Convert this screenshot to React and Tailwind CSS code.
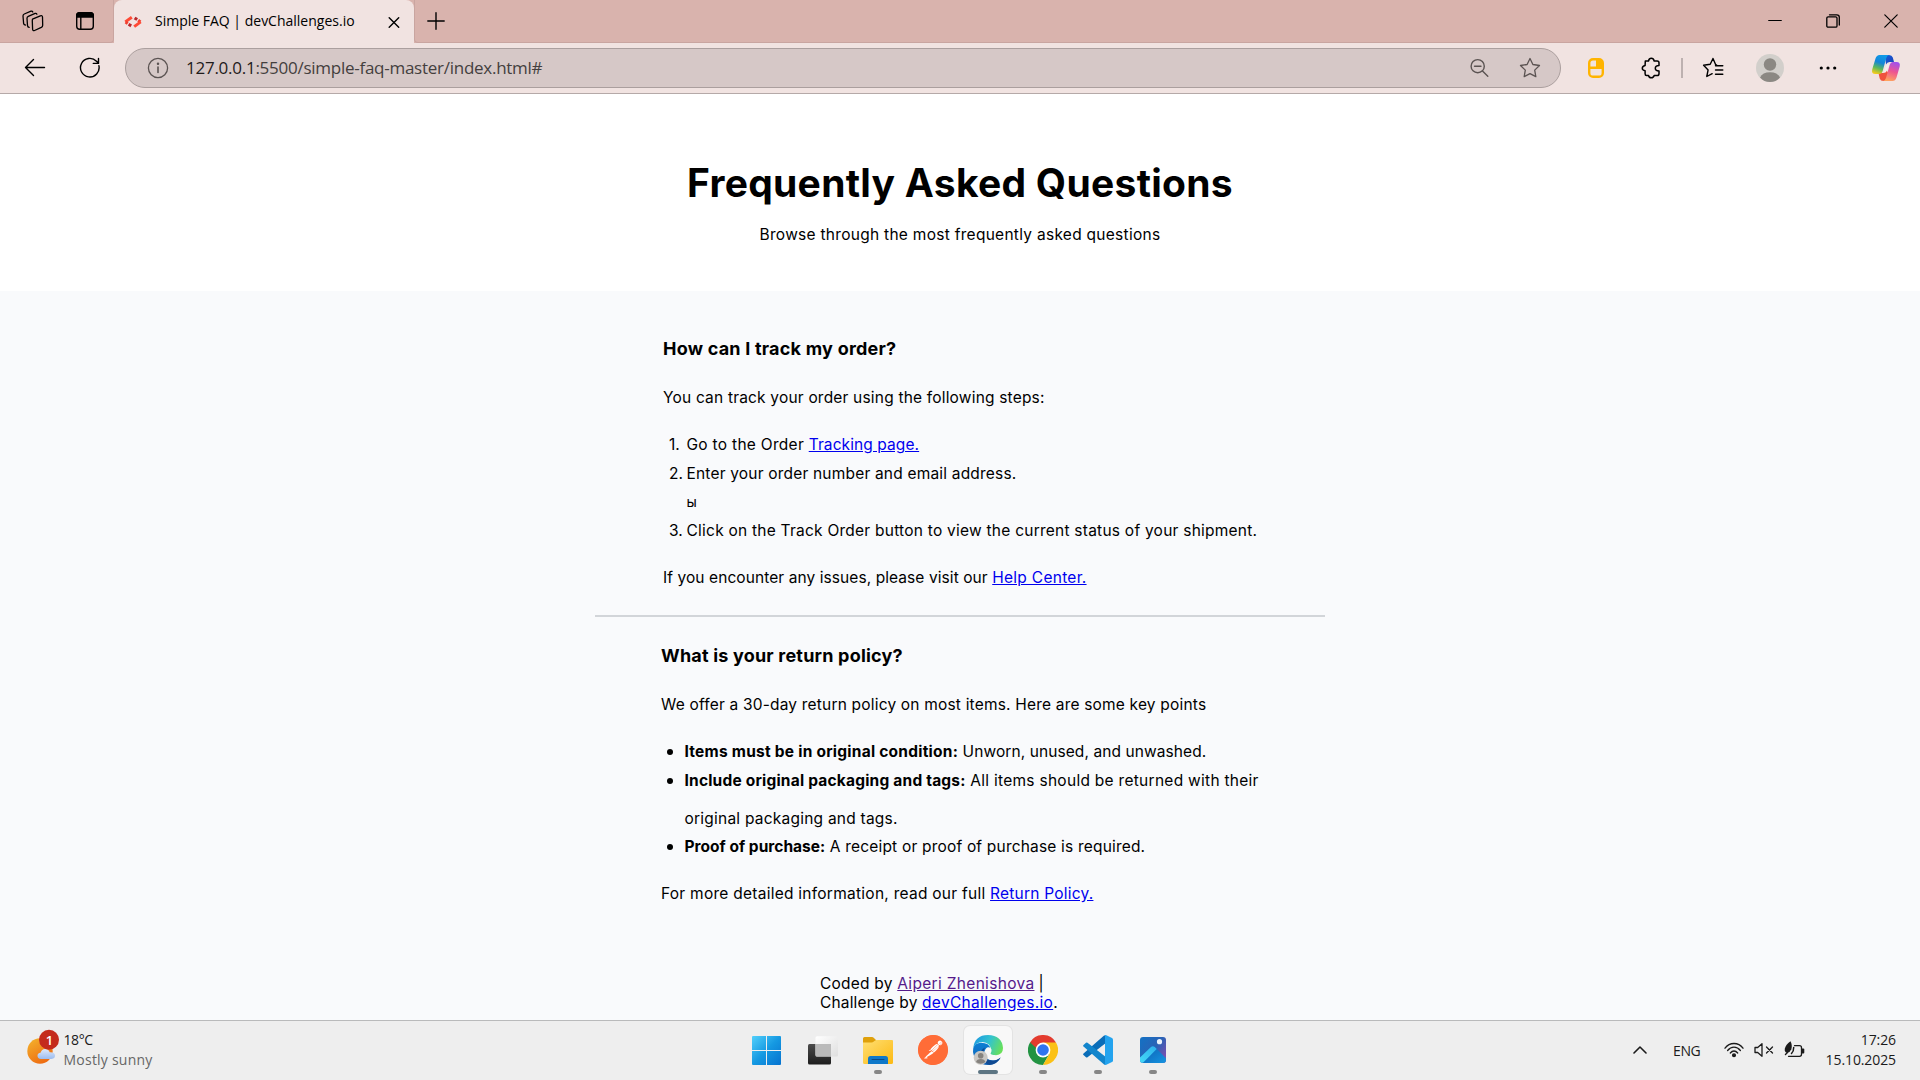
import React from "react";
import { SiPostman } from "react-icons/si";

const stroke = { fill: "none", stroke: "currentColor", strokeLinecap: "round", strokeLinejoin: "round" };

function WorkspacesIcon() {
  return (
    <svg className="h-[22px] w-[22px]" viewBox="0 0 22 22" {...stroke} strokeWidth="1.3">
      <path d="M10.5 9.2 18.3 5.8q2-.7 2.2 1.2l.2 8.2q0 1.500-1.400 2.200l-6.700 3.100q-1.900.7-2-1.200l-.3-8.300q0-1.300.2-1.800Z" />
      <path d="M7.200 17.300q-1.500-.1-1.700-1.700L5 8.300q0-1.400 1.300-2l6.800-2.900q1.300-.4 1.800.8" />
      <path d="M3.300 15q-1.500-.3-1.700-1.700L1 6q0-1.400 1.300-2L9 1.200q1.300-.4 1.800.8" />
    </svg>
  );
}

function VerticalTabsIcon() {
  return (
    <svg className="h-5 w-5" viewBox="0 0 20 20" {...stroke} strokeWidth="1.4">
      <rect x="1.700" y="1.700" width="16.600" height="16.600" rx="3" />
      <path d="M1.700 4.500q0-2.800 2.800-2.800h11q2.800 0 2.800 2.800V6H1.700Z" fill="currentColor" />
      <path d="M5.800 6v12" />
    </svg>
  );
}

function Favicon() {
  return (
    <svg className="h-[12px] w-[18px]" viewBox="0 0 18 12" fill="none" strokeWidth="3">
      <path d="M7.800 1.300 1.300 5.900" stroke="#ff4a35" />
      <path d="m1.600 6 2 1.600" stroke="#f04030" />
      <path d="m4.600 8.300 2.600 1.600" stroke="#b9282c" />
      <path d="m10.600 1.900 2.600 1.700" stroke="#b9282c" />
      <path d="m14.200 4.200 2.200 1.700" stroke="#f04030" />
      <path d="m16.700 5.900-6.500 4.700" stroke="#ff4a35" />
    </svg>
  );
}

function TabStrip() {
  return (
    <div className="flex h-[43px] shrink-0 items-stretch bg-[#d9b3ad] text-black">
      <div className="flex w-[114px] items-center rounded-br-[4px] border-b border-r border-[#c9a5a0] pl-[22px]">
        <WorkspacesIcon />
        <span className="ml-[31px]"><VerticalTabsIcon /></span>
      </div>
      <div className="flex w-[300px] items-center rounded-t-[8px] bg-[#f1e3e1] pl-[10px]">
        <Favicon />
        <span className="mb-[2px] ml-[13px] w-[233px] whitespace-nowrap font-['Open_Sans','Noto_Sans',sans-serif] text-[14px] leading-5">
          Simple FAQ | devChallenges.io
        </span>
        <svg className="h-3 w-3" viewBox="0 0 12 12" {...stroke} strokeWidth="1.400"><path d="m1.200 1.700 9.500 9.500m0-9.500-9.500 9.500" /></svg>
      </div>
      <div className="flex flex-1 items-center rounded-bl-[4px] border-b border-l border-[#c9a5a0] pl-3">
        <svg className="h-[18px] w-[18px]" viewBox="0 0 18 18" {...stroke} strokeWidth="1.400"><path d="M9 .8v16.400M.8 9h16.400" /></svg>
        <div className="ml-auto flex items-center gap-[44px] pr-[22px]">
          <svg className="h-[14px] w-[14px]" viewBox="0 0 14 14" {...stroke} strokeWidth="1.200"><path d="M.7 6.500h12.600" /></svg>
          <svg className="h-[14px] w-[14px]" viewBox="0 0 14 14" {...stroke} strokeWidth="1.300">
            <rect x=".8" y="2.800" width="10.200" height="10.400" rx="1.300" />
            <path d="M3.500.8h7.300q2.500 0 2.500 2.500V11" />
          </svg>
          <svg className="h-[14px] w-[14px]" viewBox="0 0 14 14" {...stroke} strokeWidth="1.200"><path d="m.8.8 12.400 12.400m0-12.400L.8 13.200" /></svg>
        </div>
      </div>
    </div>
  );
}

function CopilotIcon() {
  return (
    <svg className="h-[28px] w-[30px]" viewBox="0 0 30 28">
      <defs>
        <linearGradient id="cpA" x1="0.600" y1="0" x2="0.300" y2="1">
          <stop offset="0" stopColor="#0f9be8" /><stop offset=".4" stopColor="#1585d8" /><stop offset=".7" stopColor="#5cb85a" /><stop offset="1" stopColor="#f3cb1c" />
        </linearGradient>
        <linearGradient id="cpB" x1="0.700" y1="0" x2="0.400" y2="1">
          <stop offset="0" stopColor="#a050ee" /><stop offset=".5" stopColor="#ee5590" /><stop offset="1" stopColor="#ffa35e" />
        </linearGradient>
        <linearGradient id="cpC" x1="0" y1="0" x2="1" y2="1"><stop offset="0" stopColor="#1760d8" /><stop offset="1" stopColor="#1b3fb8" /></linearGradient>
      </defs>
      <path d="M14 1h4q3 0 3.800 2.600L23 8h-4.500q-2.500 0-3.500 2.500Z" fill="url(#cpC)" />
      <path d="M15.500 27h-3q-3 0-3.800-2.500L7.500 19h4.700q2.300 0 3.300-2.500l3 4Z" fill="#f0533d" />
      <path d="M8.500 1H18q-2 .4-2.700 3l-3.500 12.500Q11 20 8 20H4.500Q.2 20 1.200 15.500L4.500 4.500Q5.600 1 8.500 1Z" fill="url(#cpA)" />
      <path d="M22 8h3.500q4.200 0 3.200 4.500l-3.200 11Q24.400 27 21.500 27H12q2.300-.4 3-3l3.500-12.500Q19.400 8 22 8Z" fill="url(#cpB)" />
      <path d="M15.800 10.300h2.600L15 18.300h-2.500Z" fill="#f8ecea" />
    </svg>
  );
}

function Toolbar() {
  return (
    <div className="flex h-[51px] shrink-0 items-center border-b border-[#b5a9a8] bg-[#f1e3e1] pl-[24px] text-black">
      <svg className="h-5 w-[22px]" viewBox="0 0 22 20" {...stroke} strokeWidth="1.400"><path d="M1.500 9.500h19M9.500 1.500l-8 8 8 8" /></svg>
      <svg className="ml-[33px] h-[22px] w-[22px]" viewBox="0 0 22 22" {...stroke} strokeWidth="1.400">
        <path d="M19.900 8.700A9.300 9.300 0 1 1 17.500 4.200L19.300 6M19.500 1.400v5H14.300" />
      </svg>
      <div className="ml-[24px] flex h-[40px] w-[1436px] items-center rounded-full border border-[#ab9f9e] bg-[#d6c8c7] pl-[21px] pr-[19px] text-[#5b5352]">
        <svg className="h-[22px] w-[22px]" viewBox="0 0 22 22" {...stroke} strokeWidth="1.300">
          <circle cx="11" cy="11" r="9.600" /><path d="M11 10v5.500" strokeWidth="1.600" /><circle cx="11" cy="6.700" r=".6" fill="currentColor" />
        </svg>
        <span className="ml-[17px] whitespace-nowrap font-['Open_Sans','Noto_Sans',sans-serif] text-[17px] leading-6 tracking-[-0.26px] text-[#443f3e]">
          <span className="text-[#1f1b1b]">127.0.0.1</span>:5500/simple-faq-master/index.html#
        </span>
        <svg className="ml-auto h-[20px] w-[20px]" viewBox="0 0 20 20" {...stroke} strokeWidth="1.400"><circle cx="8.700" cy="8.200" r="6.600" /><path d="m13.500 13 5.300 5.300M5.500 8.200h6.500" /></svg>
        <svg className="ml-[30px] h-[22px] w-[22px]" viewBox="0 0 22 22" {...stroke} strokeWidth="1.300">
          <path d="m11 1.500 2.900 6 6.600 1-4.800 4.600 1.100 6.500-5.800-3-5.800 3 1.100-6.500L1.500 8.500l6.600-1Z" />
        </svg>
      </div>
      <svg className="ml-[27px] h-[20px] w-4" viewBox="0 0 16 20" fill="none">
        <rect x="1.200" y="1.200" width="13.600" height="17.600" rx="3.800" stroke="#ffb400" strokeWidth="2.400" />
        <path d="M8 1h2.500Q15 1 15 5.500V11H1V8.500h7Z" fill="#ffb400" />
      </svg>
      <svg className="ml-[37px] h-[22px] w-[20px]" viewBox="0 0 20 22" {...stroke} strokeWidth="1.500">
        <path d="M4.300 4h3.200q.6-2.700 2.800-2.700T13.200 4h3q1.800 0 1.800 1.800V8.500q-3.700.2-3.700 2.700t3.700 2.700v2.800q0 1.800-1.800 1.800h-3q-.7 2.300-2.900 2.300t-2.800-2.300H5.600q-1.500 0-1.500-1.800v-3Q1.300 13.200 1.300 11.200T4.100 8.500Z" />
      </svg>
      <div className="ml-[20px] h-[20px] w-[2px] bg-[#bdb1b0]" />
      <svg className="ml-[19px] h-[22px] w-[22px]" viewBox="0 0 22 22" {...stroke} strokeWidth="1.400">
        <path d="M14.600 8H13.800L11 1.500 8.200 7.300 1.600 8.300l4.500 4.600-1.300 6.600 5.400-2.800M13.500 8.800h7.300M13.500 13h7.300M13.500 17.200h7.300" />
      </svg>
      <svg className="ml-[32px] h-7 w-7" viewBox="0 0 28 28">
        <circle cx="14" cy="14" r="14" fill="#d2cfcb" /><circle cx="14" cy="10.500" r="6.200" fill="#8b8883" />
        <path d="M4 23.500Q6.500 18.200 14 18.200t10 5.300Q20 28 14 28T4 23.500Z" fill="#8b8883" />
      </svg>
      <svg className="ml-[35px] h-2 w-[18px]" viewBox="0 0 18 8"><circle cx="2.300" cy="4" r="1.600" /><circle cx="9" cy="4" r="1.600" /><circle cx="15.700" cy="4" r="1.600" /></svg>
      <span className="ml-[34px]"><CopilotIcon /></span>
    </div>
  );
}

function Link({ className = "", children }) {
  return <a href="#" className={"text-[#0000ee] underline " + className}>{children}</a>;
}

function Item({ mark, className = "", children }) {
  return (
    <li className={"flex " + className}>
      <span className="w-[17.500px] shrink-0">{mark}</span>
      <span>{children}</span>
    </li>
  );
}

const Dot = () => <span className="mt-[9px] block h-[6px] w-[6px] rounded-full bg-black" />;

function Page() {
  return (
    <div className="flex h-[926px] shrink-0 flex-col overflow-hidden whitespace-nowrap font-[Inter,sans-serif] text-[15.5px] leading-6 text-black">
      <header className="h-[197px] shrink-0 bg-white pt-[65px] text-center">
        <h1 className="text-[39px] font-bold leading-[48px] tracking-[0.28px]">Frequently Asked Questions</h1>
        <p className="mt-4 tracking-[0.28px]">Browse through the most frequently asked questions</p>
      </header>
      <main className="flex-1 bg-[#f9fafc]">
        <div className="mx-auto w-[730px]">
          <section className="pl-[68px] pt-[46px]">
            <h2 className="text-[18px] font-bold tracking-[0.22px]">How can I track my order?</h2>
            <p className="mt-[25px] tracking-[0.19px]">You can track your order using the following steps:</p>
            <ol className="mt-[23px] pl-[6px]">
              <Item mark="1."><span className="tracking-[0.29px]">Go to the Order </span><Link className="tracking-[0.09px]">Tracking page.</Link></Item>
              <Item mark="2." className="mt-[5px]"><span className="tracking-[0.19px]">Enter your order number and email address.</span></Item>
              <Item mark="" className="mt-1"><span className="text-[14px]">ы</span></Item>
              <Item mark="3." className="mt-[5px]"><span className="tracking-[0.24px]">Click on the Track Order button to view the current status of your shipment.</span></Item>
            </ol>
            <p className="mt-[23px]"><span className="tracking-[0.08px]">If you encounter any issues, please visit our </span><Link className="tracking-[0.28px]">Help Center.</Link></p>
          </section>
          <hr className="mt-[25px] border-t-2 border-[#d2d5d9]" />
          <section className="pl-[66px] pt-[27px]">
            <h2 className="text-[18px] font-bold tracking-[0.2px]">What is your return policy?</h2>
            <p className="mt-[25px] tracking-[0.19px]">We offer a 30-day return policy on most items. Here are some key points</p>
            <ul className="mt-[23px] pl-[6px]">
              <Item mark={<Dot />}><b className="tracking-[0.24px]">Items must be in original condition:</b><span className="tracking-[0.09px]"> Unworn, unused, and unwashed.</span></Item>
              <Item mark={<Dot />} className="mt-[5px]">
                <b className="tracking-[0.2px]">Include original packaging and tags:</b><span className="tracking-[0.28px]"> All items should be returned with their</span>
                <span className="mt-[14px] block tracking-[0.23px]">original packaging and tags.</span>
              </Item>
              <Item mark={<Dot />} className="mt-1"><b className="tracking-[0.02px]">Proof of purchase:</b><span className="tracking-[0.19px]"> A receipt or proof of purchase is required.</span></Item>
            </ul>
            <p className="mt-[23px]"><span className="tracking-[0.26px]">For more detailed information, read our full </span><Link className="tracking-[0.22px]">Return Policy.</Link></p>
          </section>
          <footer className="mt-[68px] pl-[225px] leading-[19px]">
            <p><span className="tracking-[0.22px]">Coded by </span><a href="#" className="tracking-[0.32px] text-[#551a8b] underline">Aiperi Zhenishova</a><span className="tracking-[-0.3px]"> |</span></p>
            <p><span className="tracking-[0.15px]">Challenge by </span><Link className="tracking-[0.32px]">devChallenges.io</Link>.</p>
          </footer>
        </div>
      </main>
    </div>
  );
}

function WeatherIcon() {
  return (
    <svg className="h-9 w-[34px]" viewBox="0 0 34 36">
      <defs>
        <linearGradient id="sun" x1="0" y1="0" x2=".6" y2="1"><stop offset="0" stopColor="#f4b52d" /><stop offset="1" stopColor="#ee6c12" /></linearGradient>
        <linearGradient id="cloud" x1="0" y1="0" x2="0" y2="1"><stop offset="0" stopColor="#dfe9fa" /><stop offset="1" stopColor="#9bbcf0" /></linearGradient>
      </defs>
      <circle cx="13" cy="22" r="12.700" fill="url(#sun)" />
      <path d="M14 30q-3.500-.3-3.500-3.200 0-2.600 3-3 1.200-4 5-3.800 3.300.3 4.200 3.300 5-.3 5.300 3.300 0 3.200-3.500 3.400Z" fill="url(#cloud)" />
      <circle cx="22" cy="10.700" r="10" fill="#c42b1c" />
      <text x="22.500" y="15.500" textAnchor="middle" fontFamily="Open Sans" fontWeight="600" fontSize="13" fill="#fff">1</text>
    </svg>
  );
}

function StartIcon() {
  return (
    <svg className="h-[29px] w-[29px]" viewBox="0 0 29 29">
      <defs><linearGradient id="win" gradientUnits="userSpaceOnUse" x1="0" y1="0" x2="29" y2="29"><stop offset="0" stopColor="#52d0fb" /><stop offset=".5" stopColor="#1599e2" /><stop offset="1" stopColor="#0672cf" /></linearGradient></defs>
      <path d="M1 0h13v14H0V1Q0 0 1 0ZM15 0h13q1 0 1 1v13H15ZM0 15h14v14H1q-1 0-1-1ZM15 15h14v13q0 1-1 1H15Z" fill="url(#win)" />
    </svg>
  );
}

function TaskViewIcon() {
  return (
    <svg className="h-[29px] w-[30px]" viewBox="0 0 30 29">
      <defs>
        <linearGradient id="tvD" x1="0" y1="0" x2="0" y2="1"><stop offset="0" stopColor="#4b4b4b" /><stop offset="1" stopColor="#1d1d1d" /></linearGradient>
        <linearGradient id="tvL" x1="0" y1="0" x2="1" y2="1"><stop offset="0" stopColor="#fff" /><stop offset="1" stopColor="#dfdfdf" /></linearGradient>
      </defs>
      <rect y="8" width="23" height="20.500" rx="1.500" fill="url(#tvD)" />
      <rect x="7.500" y=".3" width="22.500" height="20.200" rx="1.500" fill="url(#tvL)" />
      <path d="M7.500 8H23v12.500H9q-1.500 0-1.500-1.500Z" fill="#bababa" />
    </svg>
  );
}

function FolderIcon() {
  return (
    <svg className="h-7 w-[30px]" viewBox="0 0 30 28">
      <defs><linearGradient id="fld" x1="0" y1="0" x2="1" y2="1"><stop offset="0" stopColor="#ffdf73" /><stop offset="1" stopColor="#fcb912" /></linearGradient></defs>
      <path d="M0 2.500Q0 1 1.500 1H9q1 0 1.700.7L13 4v4H0Z" fill="#dfa00b" />
      <path d="M0 6.500h8.500q1.300 0 2.300-.9l1-.9q.8-.7 1.800-.7H29q1 0 1 1v21.500q0 1.500-1.500 1.500h-27Q0 28 0 26.500Z" fill="url(#fld)" />
      <path d="M5 28v-5.300q0-2.700 2.500-2.700h15q2.500 0 2.500 2.700V28Z" fill="#0f78c9" />
      <rect x="8.500" y="23" width="13" height="1" rx=".5" fill="#0a4a86" />
    </svg>
  );
}

function EdgeIcon() {
  return (
    <svg className="h-[30px] w-[30px]" viewBox="0 0 30 30">
      <defs>
        <linearGradient id="edG" x1="0" y1=".3" x2="1" y2=".6"><stop offset="0" stopColor="#1d9ae0" /><stop offset=".5" stopColor="#33c3cf" /><stop offset="1" stopColor="#69e157" /></linearGradient>
        <linearGradient id="edB" x1="0" y1="0" x2="0" y2="1"><stop offset="0" stopColor="#0d7fd4" /><stop offset="1" stopColor="#0f5fb4" /></linearGradient>
      </defs>
      <path d="M.2 13.500Q1.500 8 8 7.800q8.500 0 9.500 6-5-1-6.300 3.200Q11 25 20 25.500q4.500 0 7.500-2.800Q23.500 30 15 30 2 29.500 0 17Z" fill="url(#edB)" />
      <path d="M10.500 16q-1 7 6 9.300 6.500 1.300 11.300-3.100Q24.500 29 16.500 30 7.500 27 7.500 19.500q0-5 4.500-7Z" fill="#104a92" />
      <path d="M.2 13.500Q1.500 0 15 0q14 .5 15 13 0 6.700-7 7.300-6-.3-5.700-2.100 1.500-1.200 1-4Q17 8 9.500 7 2.500 7.300.2 13.500Z" fill="url(#edG)" />
      <path d="M12 16.500q.3-4 3.500-4.200 2.800.3 2.800 3 0 1.700-1 2.800-.2 2.200 5.700 2.300l-4 1.500q-5.500.5-7-5.400Z" fill="#f8f8f8" />
      <circle cx="7.700" cy="22.700" r="7" fill="#c9c7c4" /><circle cx="7.700" cy="20.700" r="2.800" fill="#85827e" />
      <path d="M3 27q.8-3 4.700-3t4.700 3q-4.700 3.500-9.400 0Z" fill="#85827e" />
    </svg>
  );
}

function ChromeIcon() {
  return (
    <svg className="h-[30px] w-[30px]" viewBox="0 0 30 30">
      <path d="M15 15 2 7.500A15 15 0 0 1 28 7.500Z" fill="#e33b2e" />
      <path d="M15 15 2 7.500A15 15 0 0 0 15 30L21.500 18.700Z" fill="#229342" />
      <path d="M15 7.500H28A15 15 0 0 1 15 30L21.500 18.700Z" fill="#fbc116" />
      <path d="M2 7.500 8.500 18.700 12 9Z" fill="#229342" />
      <path d="M2 7.500 9 14l3-6.500Z" fill="#e33b2e" />
      <path d="M2 7.500 8.500 18.700 9 14Z" fill="#229342" />
      <circle cx="15" cy="15" r="7.400" fill="#fff" /><circle cx="15" cy="15" r="5.800" fill="#2f74ee" />
    </svg>
  );
}

function VSCodeIcon() {
  return (
    <svg className="h-[30px] w-[30px]" viewBox="0 0 30 30">
      <path d="M22.500.2V8.300L4.500 22.200q-.8.600-1.500 0L.500 20q-.8-.8 0-1.600L20.800.7Q21.500 0 22.500.2Z" fill="#0a6db8" />
      <path d="M22.500 29.800v-8.100L4.500 7.800q-.8-.6-1.500 0L.500 10q-.8.800 0 1.600L20.800 29.300q.7.700 1.700.5Z" fill="#1285cc" />
      <path d="M22 .2q.6-.3 1.300 0l5.700 2.700q1 .5 1 1.700v20.800q0 1.200-1 1.700l-5.700 2.700q-.7.300-1.300 0Z" fill="#23a3ee" />
    </svg>
  );
}

function PhotosIcon() {
  return (
    <svg className="h-[26px] w-[26px]" viewBox="0 0 26 26">
      <defs>
        <linearGradient id="phA" x1="0" y1="0" x2="1" y2=".7"><stop offset="0" stopColor="#1372c4" /><stop offset=".6" stopColor="#2b62b5" /><stop offset="1" stopColor="#7950b0" /></linearGradient>
        <linearGradient id="phB" x1="0" y1="1" x2=".8" y2="0"><stop offset="0" stopColor="#45daf8" /><stop offset="1" stopColor="#2fb4ee" /></linearGradient>
        <linearGradient id="phD" x1="0" y1="0" x2="1" y2="1"><stop offset="0" stopColor="#0c5fb4" /><stop offset="1" stopColor="#1694e0" /></linearGradient>
        <clipPath id="phC"><rect width="26" height="26" rx="3" /></clipPath>
      </defs>
      <g clipPath="url(#phC)">
        <rect width="26" height="26" fill="url(#phA)" />
        <path d="M13 9.300q1-.3 1.900.6L26 21.300V26H3Z" fill="url(#phD)" />
        <path d="M0 20.500 11 10q1.900-1.700 3.800 0l1.900 1.900L3.500 25.200 2 26H0Z" fill="url(#phB)" />
        <circle cx="19.500" cy="4.700" r="2.600" fill="#eaf2fb" />
      </g>
    </svg>
  );
}

function AppButton({ active, running, children }) {
  return (
    <div className="flex h-full w-[55px] flex-col items-center pt-[5px]">
      <div className={"relative flex h-12 w-12 items-center justify-center " + (active ? "rounded-[6px] bg-[#f8f8f8] shadow-[0_0_0_1px_#e3e3e3]" : "")}>
        {children}
        {running && <span className={"absolute bottom-0 h-1 rounded-full " + (active ? "w-5 bg-[#5c7482]" : "w-2 bg-[#868686]")} />}
      </div>
    </div>
  );
}

function Taskbar() {
  return (
    <div className="flex h-[60px] shrink-0 items-center border-t border-[#b9babb] bg-[#eeeeee] font-['Open_Sans','Noto_Sans',sans-serif] text-[14px] leading-5 text-[#1b1b1b]">
      <div className="flex w-[740px] items-center pl-[27px]">
        <span className="mb-2"><WeatherIcon /></span>
        <div className="mb-[2px] ml-[2.500px]">
          <p className="tracking-[-0.4px]">18°C</p>
          <p className="tracking-[0.23px] text-[#666]">Mostly sunny</p>
        </div>
      </div>
      <div className="flex h-full">
        <AppButton><span className="mr-[2px]"><StartIcon /></span></AppButton>
        <AppButton><TaskViewIcon /></AppButton>
        <AppButton running><FolderIcon /></AppButton>
        <AppButton>
          <span className="flex h-[30px] w-[30px] rounded-full border border-[#ff6c37] bg-white"><SiPostman className="-m-px h-[30px] w-[30px] shrink-0 text-[#ff6c37]" /></span>
        </AppButton>
        <AppButton active running><EdgeIcon /></AppButton>
        <AppButton running><ChromeIcon /></AppButton>
        <AppButton running><VSCodeIcon /></AppButton>
        <AppButton running><PhotosIcon /></AppButton>
      </div>
      <div className="mb-[2px] ml-auto flex items-center pr-6">
        <svg className="h-[10px] w-[14px]" viewBox="0 0 14 10" {...stroke} strokeWidth="1.600"><path d="m1 8 6-6 6 6" /></svg>
        <span className="ml-[26px] mt-[2px] w-[28px] tracking-[-0.35px]">ENG</span>
        <svg className="ml-[23px] h-[16px] w-[20px]" viewBox="0 0 20 16" {...stroke} strokeWidth="1.300">
          <path d="M1 6.200Q4.500 1.500 10 1.500t9 4.700M3.600 8.500Q6.200 5.200 10 5.200t6.400 3.300M6.300 11Q8 9 10 9t3.700 2" />
          <circle cx="10" cy="13.300" r="1.400" fill="currentColor" />
        </svg>
        <svg className="ml-[10px] h-[16px] w-[20px]" viewBox="0 0 20 16" {...stroke} strokeWidth="1.300">
          <path d="M1 5.500h2.700L8 1.700v12.600l-4.300-3.800H1ZM12.500 5l6 6m0-6-6 6" />
        </svg>
        <svg className="ml-[10px] h-[18px] w-[21px]" viewBox="0 0 21 18" {...stroke} strokeWidth="1.300">
          <path d="M10.500 4.700h5q2 0 2 2v6.600q0 2-2 2h-11" />
          <path d="M18 7.500h1.300q1 0 1 1v3q0 1-1 1H18Z" fill="currentColor" stroke="none" />
          <path d="M6.500.3Q8.700 4.500 7.300 8.300q-1.300 3.200-4 3.500Q.2 11.500.8 7.800 1.700 3.700 6.500.3Z" fill="currentColor" stroke="none" />
          <path d="M1.500 13.500Q4 11.500 4.500 8.500M7.500 12.500q2.300-2.300 2.200-6" strokeWidth="1.500" />
        </svg>
        <div className="ml-[20px] w-[71px] text-right">
          <p className="tracking-[-0.1px]">17:26</p>
          <p className="tracking-[-0.1px]">15.10.2025</p>
        </div>
      </div>
    </div>
  );
}

export default function App() {
  return (
    <div className="flex h-[1080px] w-[1920px] flex-col overflow-hidden bg-white">
      <TabStrip />
      <Toolbar />
      <Page />
      <Taskbar />
    </div>
  );
}
